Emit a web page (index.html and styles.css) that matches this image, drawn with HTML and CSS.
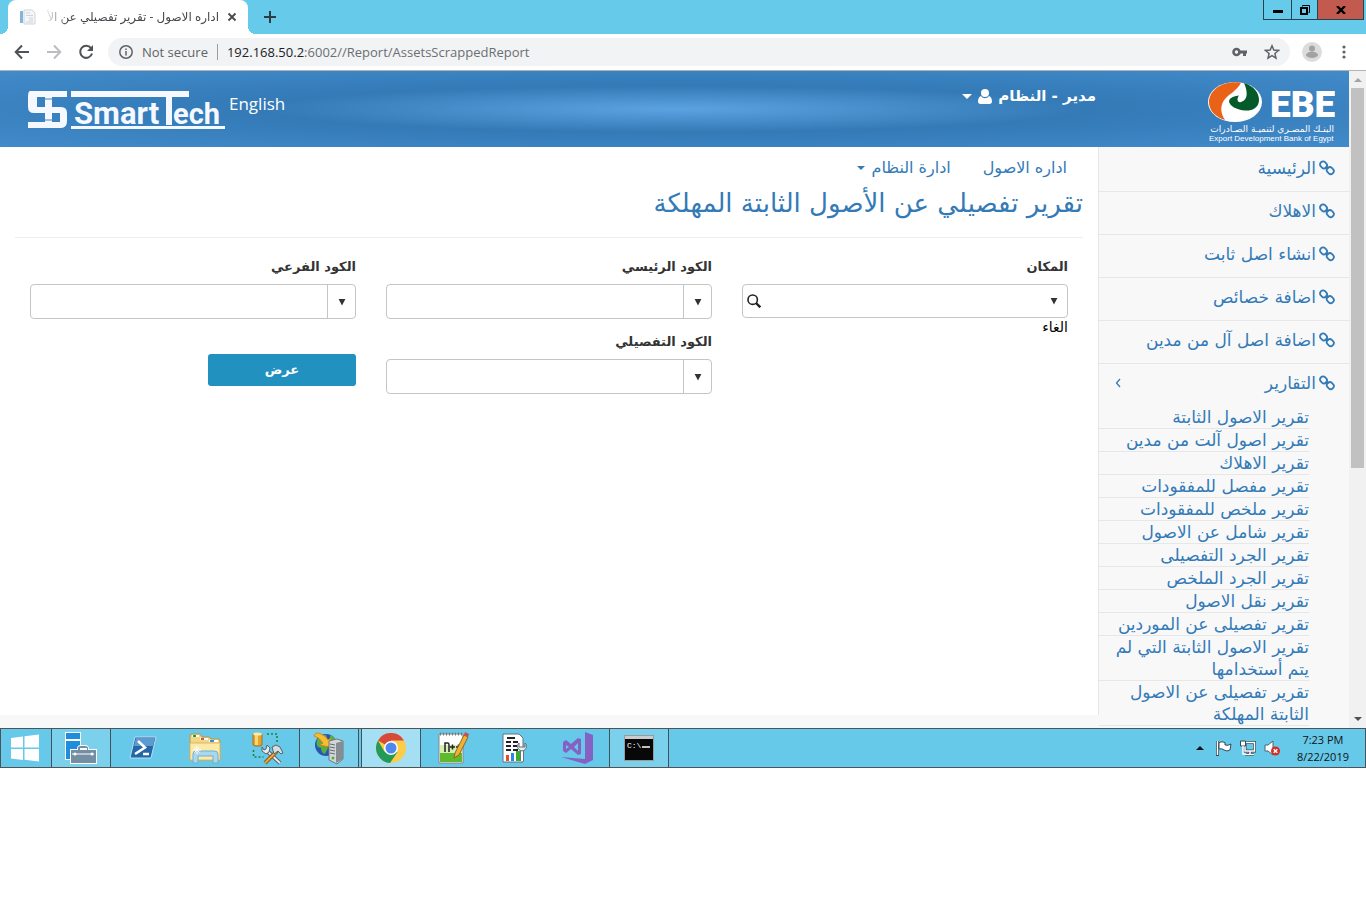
FILE: index.html
```html
<!DOCTYPE html>
<html lang="ar">
<head>
<meta charset="utf-8">
<title>اداره الاصول - تقرير تفصيلي عن الأصول</title>
<link rel="stylesheet" href="styles.css">
</head>
<body>
<svg class="defs" width="0" height="0" aria-hidden="true">
  <symbol id="link" viewBox="0 0 16 16"><g fill="none" stroke="currentColor" stroke-width="1.800"><rect x=".900" y="1.900" width="7.200" height="6" rx="2.800" transform="rotate(45 4.500 4.900)"/><rect x="7.700" y="7.600" width="7.200" height="6" rx="2.800" transform="rotate(45 11.300 10.600)"/><path d="M6 7.800l2.800-1M7 9l2.600-1"/></g></symbol>
  <symbol id="tri" viewBox="0 0 8 8"><path d="M.6 1h6.8L4 7.4z" fill="currentColor"/></symbol>
  <symbol id="caret" viewBox="0 0 10 5"><path d="M0 0h10L5 5z" fill="currentColor"/></symbol>
</svg>

<header class="tabs">
  <div class="tab">
    <svg class="favicon" viewBox="0 0 16 16" width="16" height="16"><path d="M4 1h8l3 3v11H4z" fill="#f2f4f6" stroke="#c3cbd2"/><path d="M6 4h4M6 6.500h7M9 9h4M9 11h4M6 13h7" stroke="#c3cbd2"/><path d="M0 2h3v12H0z" fill="#62a5d8"/></svg>
    <span class="tab-title" dir="rtl">اداره الاصول - تقرير تفصيلي عن الأ</span>
    <button class="plain" aria-label="Close tab"><svg width="10" height="10" viewBox="0 0 10 10"><path d="M1.500 1.500l7 7M8.500 1.500l-7 7" stroke="#45494d" stroke-width="1.800"/></svg></button>
  </div>
  <button class="plain new-tab" aria-label="New tab"><svg width="12" height="12" viewBox="0 0 12 12"><path d="M6 0v12M0 6h12" stroke="#2f3b42" stroke-width="2"/></svg></button>
  <div class="window-buttons">
    <button class="win min" aria-label="Minimize"><svg width="10" height="10"><path d="M0 5h10v3H0z"/></svg></button>
    <button class="win restore" aria-label="Restore"><svg width="10" height="10" viewBox="0 0 10 10" fill="none" stroke="#000"><path d="M2.500 1.500V.500h7v7h-1"/><path d="M1 3h6v6H1z" stroke-width="2"/></svg></button>
    <button class="win close" aria-label="Close"><svg width="10" height="8" viewBox="0 0 10 8"><path d="M1 0l8 8M9 0L1 8" stroke="#000" stroke-width="2.400"/></svg></button>
  </div>
</header>

<nav class="toolbar" aria-label="Browser">
  <button class="plain" aria-label="Back"><svg width="16" height="16" viewBox="0 0 16 16" fill="none" stroke="#4f5357" stroke-width="2"><path d="M15 8H2M8 1.500L1.700 8 8 14.500"/></svg></button>
  <button class="plain" aria-label="Forward"><svg width="16" height="16" viewBox="0 0 16 16" fill="none" stroke="#bbbdc0" stroke-width="2"><path d="M1 8h13M8 1.500L14.300 8 8 14.500"/></svg></button>
  <button class="plain" aria-label="Reload"><svg width="16" height="16" viewBox="0 0 16 16"><path d="M13 4.200A6 6 0 1 0 14 9.500" fill="none" stroke="#4f5357" stroke-width="2"/><path d="M15 1v6H9z" fill="#4f5357"/></svg></button>
  <div class="address">
    <svg width="14" height="14" viewBox="0 0 14 14" fill="none" stroke="#5f6368" stroke-width="1.500"><circle cx="7" cy="7" r="6.200"/><path d="M7 6v4.500M7 3.400v1.600"/></svg>
    <span class="insecure">Not secure</span>
    <span class="url"><b>192.168.50.2</b>:6002//Report/AssetsScrappedReport</span>
    <svg class="key" width="16" height="10" viewBox="0 0 16 10"><circle cx="4.500" cy="5" r="3" fill="none" stroke="#5f6368" stroke-width="2.600"/><path d="M7 3.600h8v2.800h-1V9h-3V6.400H7z" fill="#5f6368"/></svg>
    <svg width="16" height="16" viewBox="0 0 16 16"><path d="M8 1.800l1.800 4.300 4.700.4-3.600 3 1.100 4.600L8 11.700l-4 2.400 1.100-4.600-3.600-3 4.700-.4z" fill="none" stroke="#5f6368" stroke-width="1.500"/></svg>
  </div>
  <svg class="avatar" width="20" height="20" viewBox="0 0 20 20"><circle cx="10" cy="10" r="10" fill="#dcdcdc"/><circle cx="10" cy="6.500" r="3" fill="#a2a2a2"/><path d="M4 13.500c0-5 12-5 12 0-2 3.300-10 3.300-12 0z" fill="#a2a2a2"/></svg>
  <button class="plain" aria-label="Menu"><svg width="4" height="14"><g fill="#5f6368"><circle cx="2" cy="2" r="1.600"/><circle cx="2" cy="7" r="1.600"/><circle cx="2" cy="12" r="1.600"/></g></svg></button>
</nav>

<div class="viewport">
  <div class="site" dir="rtl">
    <header class="banner">
      <svg class="ebe" width="128" height="64" viewBox="0 0 128 64" direction="ltr" role="img" aria-label="EBE">
        <ellipse cx="28" cy="23" rx="27" ry="20" fill="#fff"/>
        <path d="M34 3.500C14 1 2 12 2 23c0 8 6 15 16 18-5-7-5-15 0-21 5-6 12-8 16-16.500z" fill="#ea6218"/>
        <path d="M37 4c10 3 15 10 15 17 0 8-7 11-14 10.500-8-.5-16-4.500-16-9.500 1-4 6-5 10-5.500-3 4-1 7.500 2 6.500 7-2 7-10 3-19z" fill="#045a28"/>
        <text class="ebe-name" x="63" y="38">EBE</text>
        <text class="ebe-ar" x="127" y="53" direction="rtl">البنـك المصـري لتنميـة الصـادرات</text>
        <text class="ebe-en" x="2" y="62">Export Development Bank of Egypt</text>
      </svg>
      <button class="plain user">مدير - النظام
        <svg width="14" height="15" viewBox="0 0 14 15" fill="#fff"><circle cx="7" cy="4" r="4"/><path d="M3 7c2 3 6 3 8 0 2 .5 3 3 3 5.500 0 1.500-1 2.500-2.500 2.500h-9C1 15 0 14 0 12.500 0 10 1 7.500 3 7z"/></svg>
        <svg width="10" height="5"><use href="#caret"/></svg>
      </button>
      <div class="left-brand" dir="ltr">
        <svg width="200" height="42" viewBox="0 0 200 42" fill="#f5f9ff" role="img" aria-label="SmartTech">
          <path d="M3 2h37v6H25v10h9q6 0 6 6v8q0 7-6 7H1v-6h17V24H7q-6 0-6-6V8q0-6 2-6zm7 6v10h8V8zm15 16v9h8v-9z"/>
          <path d="M18 10h7M18 31h7" stroke="#3d83c2" stroke-width="1"/>
          <path d="M44 2h118v6h-17v28h-6V8H44zM44 37h154v3H44z"/>
          <text class="smart" x="47" y="35">Smart</text><text class="smart ech" x="146" y="35">ech</text>
        </svg>
        <a class="language" href="#">English</a>
      </div>
    </header>
    <div class="body">
      <aside class="sidebar">
        <ul class="menu">
          <li><a href="#"><svg width="16" height="16"><use href="#link"/></svg>الرئيسية</a></li>
          <li><a href="#"><svg width="16" height="16"><use href="#link"/></svg>الاهلاك</a></li>
          <li><a href="#"><svg width="16" height="16"><use href="#link"/></svg>انشاء اصل ثابت</a></li>
          <li><a href="#"><svg width="16" height="16"><use href="#link"/></svg>اضافة خصائص</a></li>
          <li><a href="#"><svg width="16" height="16"><use href="#link"/></svg>اضافة اصل آل من مدين</a></li>
          <li class="open"><a href="#"><svg width="16" height="16"><use href="#link"/></svg>التقارير<svg class="chevron" width="6" height="10" viewBox="0 0 6 10"><path d="M5 1L1.500 5 5 9" fill="none" stroke="#337ab7" stroke-width="1.300"/></svg></a>
            <ul class="submenu">
              <li><a href="#">تقرير الاصول الثابتة</a></li>
              <li><a href="#">تقرير اصول آلت من مدين</a></li>
              <li><a href="#">تقرير الاهلاك</a></li>
              <li><a href="#">تقرير مفصل للمفقودات</a></li>
              <li><a href="#">تقرير ملخص للمفقودات</a></li>
              <li><a href="#">تقرير شامل عن الاصول</a></li>
              <li><a href="#">تقرير الجرد التفصيلى</a></li>
              <li><a href="#">تقرير الجرد الملخص</a></li>
              <li><a href="#">تقرير نقل الاصول</a></li>
              <li><a href="#">تقرير تفصيلى عن الموردين</a></li>
              <li><a href="#">تقرير الاصول الثابتة التي لم<br>يتم أستخدامها</a></li>
              <li><a href="#">تقرير تفصيلى عن الاصول<br>الثابتة المهلكة</a></li>
            </ul>
          </li>
        </ul>
      </aside>
      <main class="main">
        <nav class="topnav">
          <a href="#">اداره الاصول</a>
          <a href="#">ادارة النظام <svg width="8" height="4" viewBox="0 0 10 5"><use href="#caret" width="10" height="5"/></svg></a>
        </nav>
        <h1>تقرير تفصيلي عن الأصول الثابتة المهلكة</h1>
        <form class="filters">
          <div class="column">
            <div class="field">
              <label for="place">المكان</label>
              <div class="control place">
                <select id="place"><option></option></select>
                <svg class="arrow" width="8" height="8"><use href="#tri"/></svg>
                <svg class="search" width="14" height="14" viewBox="0 0 14 14"><circle cx="5.700" cy="5.700" r="4.700" fill="none" stroke="#222" stroke-width="1.600"/><path d="M9 9l4.300 4.300" stroke="#222" stroke-width="2.400"/></svg>
              </div>
              <a class="cancel" href="#">الغاء</a>
            </div>
          </div>
          <div class="column">
            <div class="field">
              <label for="main-code">الكود الرئيسي</label>
              <div class="control"><button type="button" aria-label="فتح"><svg width="8" height="8"><use href="#tri"/></svg></button><input id="main-code" type="text"></div>
            </div>
            <div class="field">
              <label for="detail-code">الكود التفصيلي</label>
              <div class="control"><button type="button" aria-label="فتح"><svg width="8" height="8"><use href="#tri"/></svg></button><input id="detail-code" type="text"></div>
            </div>
          </div>
          <div class="column">
            <div class="field">
              <label for="sub-code">الكود الفرعي</label>
              <div class="control"><button type="button" aria-label="فتح"><svg width="8" height="8"><use href="#tri"/></svg></button><input id="sub-code" type="text"></div>
            </div>
            <button class="show" type="button">عرض</button>
          </div>
        </form>
      </main>
    </div>
  </div>
  <div class="scrollbar" aria-hidden="true">
    <svg width="17" height="17"><path d="M5 11h8L9 7z" fill="#a3a3a3"/></svg>
    <div class="thumb"></div>
    <svg class="down" width="17" height="17"><path d="M5 6h8l-4 4z" fill="#505050"/></svg>
  </div>
</div>

<footer class="taskbar">
  <button class="task start" aria-label="Start"><svg width="28" height="28" viewBox="0 0 28 28" fill="#fff"><path d="M0 4l12-1.500v11H0zM13.500 2.300L28 .500v13H13.500zM0 15h12v11L0 24.500zM13.500 15H28v12.500l-14.500-1.800z"/></svg></button>
  <button class="task running" aria-label="Server Manager"><svg width="34" height="34" viewBox="0 0 34 34"><path d="M1 1h16v28H1z" fill="#fff"/><path d="M2 2h14v6H2zM2 10h14v18H2z" fill="#1f8ddd"/><path d="M6 18h7q0-4 4-4h4q4 0 4 4h8v15H6z" fill="#fff"/><path d="M7 19h7v-2q0-2 3-2h4q3 0 3 2v2h8v13H7zm9 0h7v-2h-7z" fill="#748ea3"/><path d="M8 23h22" stroke="#fff"/><circle cx="11" cy="23" r="1.500" fill="#fff"/><circle cx="28" cy="23" r="1.500" fill="#fff"/></svg></button>
  <button class="task" aria-label="PowerShell"><svg width="28" height="24" viewBox="0 0 28 24"><path d="M6 1h21l-5 21H1z" fill="#2467a8" stroke="#bcdcf0"/><path d="M7 2h19l-2 8H5z" fill="#5c9bd0"/><path d="M9 5l7 6.500L6 18M14 18h6" fill="none" stroke="#fff" stroke-width="2.500"/></svg></button>
  <button class="task" aria-label="File Explorer"><svg width="34" height="32" viewBox="0 0 34 32"><path d="M2 4q0-2 2-2h8l2 3h7l2 2h8l1 2v19H2z" fill="#f4d684" stroke="#b99649"/><path d="M4 3h7v2H4zM12 6h8v2h-8zM21 8h9v2h-9z" fill="#fff"/><path d="M5 3h3v2H5z" fill="#16a33a"/><path d="M13 6h3v2h-3z" fill="#d6573b"/><path d="M22 8h4v2h-4z" fill="#348fd4"/><path d="M2 11h30v17H2z" fill="#fbeaa9" stroke="#dcb964"/><path d="M5 31V22q0-3 3-3h18q4 0 4 3v9h-5v-7H10v7z" fill="#a9d8ee" stroke="#6eafd0"/><path d="M9 14v8M5 18h8M6.500 15.500l5 5M11.500 15.500l-5 5" stroke="#fff"/></svg></button>
  <button class="task" aria-label="SQL Server Management Studio"><svg width="34" height="34" viewBox="0 0 34 34"><path d="M3 3v11c2 1.500 7 1.500 9 0V3z" fill="#e5a52c" stroke="#a9711c"/><path d="M5 4h3v10H5z" fill="#f8d576"/><ellipse cx="7.500" cy="3" rx="4.500" ry="1.600" fill="#ffe9a4"/><path d="M17 3h10v10M3.500 19v7h10" fill="none" stroke="#23803a" stroke-width="1.600" stroke-dasharray="2 2"/><path d="M30 32L16 19" stroke="#53616b" stroke-width="4"/><path d="M30 32L16 19" stroke="#e6ebee" stroke-width="2"/><path d="M12 16v4l4 3 3-2 1-4-3-3-1 4-2 1z" fill="#e6ebee" stroke="#53616b"/><path d="M15 32L27 20" stroke="#9b611b" stroke-width="4"/><path d="M15 32L26 21" stroke="#f2b44a" stroke-width="1.600"/><path d="M22 16l4-2 4 2 3 6-2 1-3-3-4 3z" fill="#d7dee2" stroke="#53616b"/></svg></button>
  <button class="task running" aria-label="IIS Manager"><svg width="34" height="34" viewBox="0 0 34 34"><circle cx="14" cy="14" r="11" fill="#2556b0"/><path d="M5 9q4-5 9-5 3 6-1 10l3 3-3 6q-4-1-4-6-6-1-4-8zM18 4q6 2 6 8h-6z" fill="#59ad42"/><path d="M2 5q2-5 7-2 5 2 7 6l3-2-2 9-9-2 3-2Q7 6 2 5z" fill="#f6bd32" stroke="#c88c14"/><path d="M17 10l8-2 6 2v18l-6 5-8-4z" fill="#d2d6d9" stroke="#6f777d"/><path d="M24 12l7-2v18l-7 4z" fill="#858d93"/><path d="M18 13l5 1M18 16l5 1M18 19l5 1M18 22l5 1" stroke="#60686e"/><circle cx="21" cy="27" r="1.500" fill="#43b63f"/></svg></button>
  <button class="task running current" aria-label="Chrome"><svg width="30" height="30" viewBox="0 0 30 30"><circle cx="15" cy="15" r="15" fill="#fbcd48"/><path d="M15 15L2 7.500A15 15 0 0 1 28 7.500H15z" fill="#d8493a"/><path d="M2 7.500A15 15 0 0 0 14 30l7.500-11L15 15l-6.500 3.700z" fill="#249a58"/><circle cx="15" cy="15" r="7" fill="#fff"/><circle cx="15" cy="15" r="5.500" fill="#4c88ee"/></svg></button>
  <button class="task" aria-label="Notepad++"><svg width="32" height="34" viewBox="0 0 32 34"><path d="M2 3h24v29H2z" fill="#fff" stroke="#858585"/><path d="M3 14h22v17H3z" fill="#d4efb0"/><path d="M3 22h22v9H3z" fill="#5fba2d"/><path d="M3 3h22" stroke="#777" stroke-width="3" stroke-dasharray="1 2"/><path d="M8 21v-9h3q1 0 1 2v7M13 16h5M15.500 13.500v5M19 16h5M21.500 13.500v5" fill="none" stroke="#222" stroke-width="1.500"/><path d="M17 27l1-5 9-18 4 2-9 18z" fill="#efb236" stroke="#8e671c"/><path d="M27 4l1-3 4 2-1 3z" fill="#c94e57"/></svg></button>
  <button class="task" aria-label="Report Builder"><svg width="26" height="30" viewBox="0 0 26 30"><path d="M1 1h16l4 4v24H1z" fill="#fff" stroke="#65717b"/><path d="M5 5h8M4 9h5m2 0h5M4 13h5m2 0h4M4 17h5m2 0h5" stroke="#222" stroke-width="2"/><path d="M4 22h3v6H4z" fill="#e94c2c"/><path d="M9 20h3v8H9z" fill="#268be2"/><path d="M14 18h4v10h-4z" fill="#38ad31"/><path d="M20 17v11" stroke="#68747e" stroke-width="4"/><path d="M20 17v11" stroke="#fff" stroke-width="2"/><path d="M17 10a4.500 4.500 0 1 0 6 0v4h-6z" fill="#e7edf1" stroke="#66727c"/></svg></button>
  <button class="task" aria-label="Visual Studio"><svg width="32" height="32" viewBox="0 0 32 32" fill="#8661c5"><path d="M24 0l8 3v25l-8 4L0 25l24 2z"/><path fill-rule="evenodd" d="M2 10l3-2 5 4 7-6 3 1v15l-3 1-7-6-5 4-3-2zm3 3v4l3-2zm12-2l-4 4 4 4z"/></svg></button>
  <button class="task running" aria-label="Command Prompt"><svg width="30" height="26" viewBox="0 0 30 26"><path d="M.500.500h29v25H.500z" fill="#080808" stroke="#9b9b9b"/><path d="M1 1h28v3H1z" fill="#c9cdd0"/><text class="prompt" x="3" y="13">C:\</text><path d="M18 12h8" stroke="#fff" stroke-width="1.500"/></svg></button>
  <div class="tray">
    <svg width="8" height="4" viewBox="0 0 8 4"><path d="M0 4h8L4 0z" fill="#111"/></svg>
    <svg width="16" height="16" viewBox="0 0 16 16"><path d="M1.500 1v15" stroke="#334854" stroke-width="3"/><path d="M1.500 1v14" stroke="#fff" stroke-width="1.500"/><path d="M3 2.500q3-1.500 6 0V5q3 1 6-1l-1 6q-3 2-6 0-2-2-5-1z" fill="#fff" stroke="#334854"/></svg>
    <svg width="16" height="16" viewBox="0 0 16 16"><path d="M5 2.500h9.500v8.500H5zM10 11v3.500M5 14.500h9" fill="none" stroke="#334854" stroke-width="3"/><path d="M5 2.500h9.500v8.500H5zM10 11v3.500M5 14.500h9" fill="none" stroke="#fff" stroke-width="1.500"/><path d="M.500 1h5v5h-5z" fill="#fff" stroke="#334854"/><path d="M3 6v8h3" fill="none" stroke="#fff" stroke-width="1.500"/></svg>
    <svg width="16" height="16" viewBox="0 0 16 16"><path d="M1 5h3l5-4v14l-5-4H1z" fill="#fff" stroke="#4b6470"/><circle cx="11.500" cy="11" r="4.500" fill="#da2b22"/><path d="M9.700 9.200l3.600 3.600M13.300 9.200l-3.600 3.600" stroke="#fff" stroke-width="1.500"/></svg>
    <div class="clock">7:23 PM<br>8/22/2019</div>
  </div>
</footer>
</body>
</html>
```
FILE: styles.css
```css
* { box-sizing: border-box; }
body { margin: 0; background: #fff; font-family: "Open Sans", "DejaVu Sans", sans-serif; font-size: 16px; line-height: 22px; color: #333; }
a { color: #337ab7; text-decoration: none; }
ul { list-style: none; margin: 0; padding: 0; }
svg { flex: none; display: block; }
button, input, select { font: inherit; }
.defs { position: absolute; }
.plain { background: none; border: 0; padding: 0; display: flex; align-items: center; }

.tabs { display: flex; height: 34px; padding-left: 8px; background: #66caeb; }
.tab { position: relative; display: flex; align-items: center; gap: 8px; width: 240px; padding: 0 11px 0 12px; background: #fff; border-radius: 8px 8px 0 0; }
.tab::before, .tab::after { content: ""; position: absolute; bottom: 0; width: 8px; height: 8px; }
.tab::before { right: 100%; background: radial-gradient(circle at 0 0, transparent 8px, #fff 8px); }
.tab::after { left: 100%; background: radial-gradient(circle at 100% 0, transparent 8px, #fff 8px); }
.tab-title { flex: 1; min-width: 0; white-space: nowrap; font-size: 12px; color: #45494d; mask-image: linear-gradient(to right, transparent, #000 24px); }
.favicon { opacity: .8; }
.new-tab { margin-left: 16px; }
.window-buttons { display: flex; align-items: flex-start; margin-left: auto; padding-right: 2px; }
.win { display: flex; align-items: center; justify-content: center; height: 20px; padding: 0; border: 1px solid #29434d; border-width: 0 0 1px 1px; background: none; }
.min { width: 28px; }
.restore { width: 26px; }
.close { width: 47px; border-right-width: 1px; background: #c35a50; }

.toolbar { display: flex; align-items: center; gap: 16px; height: 37px; padding: 0 20px 0 14px; border-bottom: 1px solid #b3b3b3; font-size: 13px; }
.address { display: flex; align-items: center; flex: 1; height: 28px; margin-left: -2px; padding: 0 10px 0 11px; border-radius: 14px; background: #f1f3f4; }
.insecure { margin-left: 9px; padding-right: 9px; border-right: 1px solid #9a9da1; line-height: 16px; color: #5f6368; }
.url { margin-left: 9px; color: #6b6f73; }
.url b { font-weight: 400; color: #202124; }
.key { margin: 0 16px 0 auto; }
.avatar { margin: 0 4px 0 -4px; }

.viewport { display: flex; }
.site { flex: 1; min-width: 0; background: #f8f8f8; font-family: "DejaVu Sans", sans-serif; font-size: 16px; }
.banner { display: flex; align-items: flex-start; height: 76px; padding: 8px 14px 0 27px; background: radial-gradient(ellipse at center, #5ba2e0 0, #337ab7 43%, #428bca 100%); }
.ebe-name { font: 900 37px Roboto, sans-serif; fill: #fff; }
.ebe-ar { font: 9px "DejaVu Sans", sans-serif; fill: #fff; }
.ebe-en { font: 8px "Liberation Sans", sans-serif; fill: #fff; }
.user { gap: 6px; margin: 6px 111px 0 0; color: #fff; font-weight: 700; font-size: 15px; }
.left-brand { display: flex; gap: 2px; margin: 10px auto 0 0; }
.language { color: #fff; font: 17px/30px "Open Sans", sans-serif; }
.smart { font: 700 31px Roboto, sans-serif; }
.ech { font-size: 29px; }

.body { display: flex; }
.sidebar { width: 250px; padding: 2px 0; font-size: 17px; }
.menu > li { border-bottom: 1px solid #e7e7e7; }
.menu > .open { border: 0; }
.menu > li > a { display: flex; align-items: center; gap: 3px; padding: 8px 14px 12px; }
.chevron { margin: 0 auto 0 2px; }
.submenu { padding-right: 40px; }
.submenu li { border-bottom: 1px solid #e7e7e7; }
.submenu a { display: block; }
.main { flex: 1; min-width: 0; margin-bottom: 13px; padding: 0 15px; background: #fff; border-right: 1px solid #e7e7e7; }
.topnav { display: flex; }
.topnav a { display: flex; align-items: center; gap: 6px; padding: 10px 16px; }
h1 { margin: 0; padding-bottom: 20px; border-bottom: 1px solid #eee; font-size: 26px; line-height: 28px; font-weight: 400; color: #337ab7; }
.filters { display: grid; grid-template-columns: repeat(3, 1fr); gap: 30px; padding: 18px 15px 0; }
.column { display: flex; flex-direction: column; gap: 12px; align-items: flex-start; }
.field { width: 100%; }
.field label { display: block; margin-bottom: 6px; font-size: 13px; font-weight: 700; }
.control { display: flex; height: 35px; border: 1px solid #c5c5c5; border-radius: 4px; background: #fff; overflow: hidden; }
.control button { display: flex; align-items: center; justify-content: center; width: 28px; padding: 0; border: 0; border-left: 1px solid #c5c5c5; background: none; color: #333; }
.control input { flex: 1; min-width: 0; padding: 0 8px; border: 0; background: none; }
.place { position: relative; height: 34px; color: #333; }
.place select { flex: 1; appearance: none; border: 0; padding: 0 28px; background: none; }
.arrow { position: absolute; top: 12px; right: 9px; }
.search { position: absolute; top: 9px; left: 4px; }
.cancel { display: block; line-height: 18px; font-size: 14px; color: #000; }
.show { width: 148px; height: 32px; margin-top: 23px; border: 0; border-radius: 3px; background: #2191c0; color: #fff; font-size: 13px; font-weight: 700; }

.scrollbar { display: flex; flex-direction: column; align-items: center; width: 17px; background: #f1f1f1; }
.thumb { width: 13px; height: 380px; background: #c1c1c1; }
.down { margin-top: auto; }

.taskbar { display: flex; height: 40px; border: 1px solid #4d5357; background: #66c9e9; gap: 2px; }
.task { display: flex; align-items: center; justify-content: center; width: 60px; padding: 0; border: 0 solid #41525b; background: none; }
.start { width: 48px; }
.running { border-width: 0 1px; background: #7bd0ec; }
.current { background: #a5dff3; }
.prompt { font: 8px "Liberation Mono", monospace; fill: #fff; }
.tray { display: flex; align-items: center; gap: 8px; margin-left: auto; padding-right: 16px; }
.tray svg:first-child { margin-right: 4px; }
.clock { margin-left: 9px; font-size: 11px; line-height: 17px; text-align: center; color: #111; }
```
